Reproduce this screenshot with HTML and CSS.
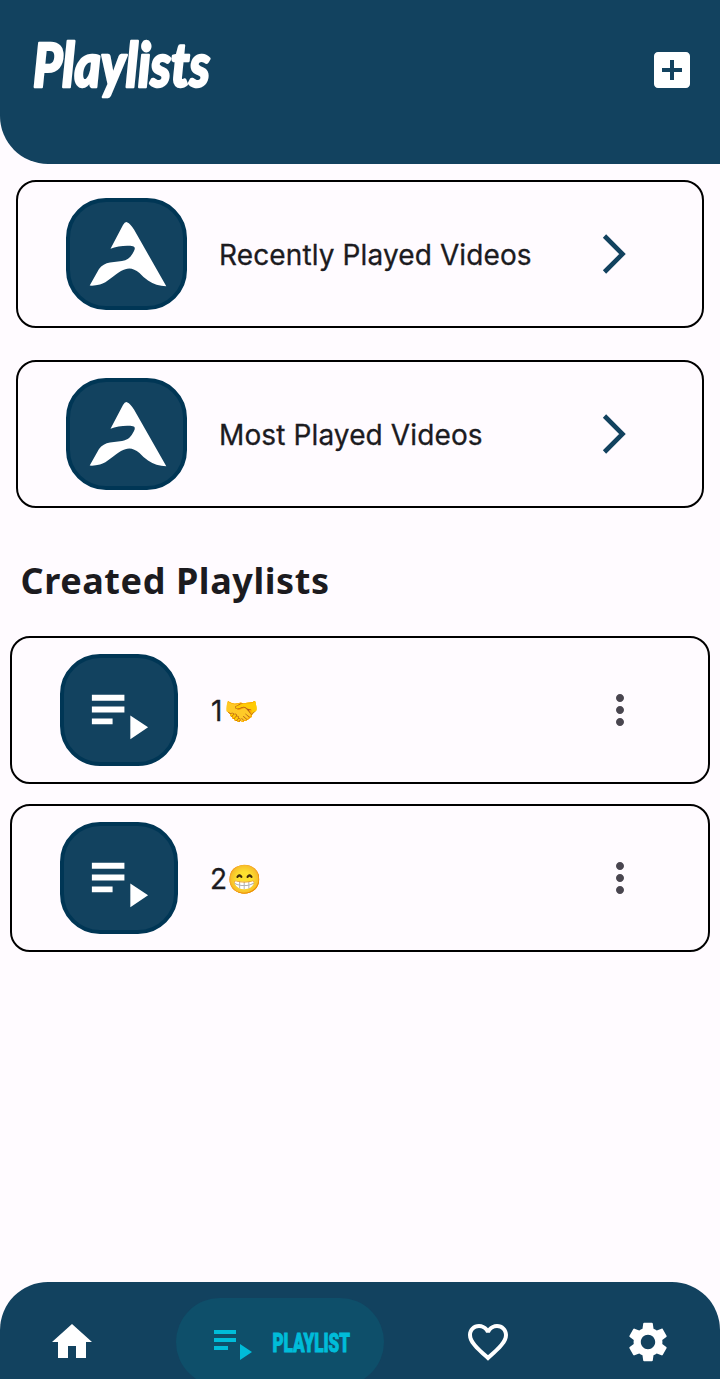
FILE: index.html
```html
<!DOCTYPE html>
<html lang="en">
<head>
<meta charset="utf-8">
<title>Playlists</title>
<link rel="stylesheet" href="styles.css">
</head>
<body>
<svg class="defs" aria-hidden="true">
  <symbol id="logo" viewBox="0 0 80 68"><path fill="#fff" d="M34 5Q36.300 1 38.500 2.500Q41 3.500 45 9.500L77.300 66.300Q67 66 59 60.500Q55 58 50.500 53C44 47.500 39 47 32 51C26 54 18 63 11 64.500Q5 66 .7 65.500L10 49Q14 43.500 21 42.500L33 41C39 40 42 37 45 31Q47 27 44 26.200C38 25 28 26 21.500 28.800Z"/></symbol>
  <symbol id="queue" viewBox="0 0 24 24"><path fill="currentColor" d="M3 6h11v2H3zm0 4h11v2H3zm0 4h7v2H3zm13-1v8l6-4z"/></symbol>
  <symbol id="more" viewBox="0 0 24 24"><path fill="currentColor" d="M12 8c1.100 0 2-.9 2-2s-.9-2-2-2-2 .9-2 2 .9 2 2 2zm0 2c-1.100 0-2 .9-2 2s.9 2 2 2 2-.9 2-2-.9-2-2-2zm0 6c-1.100 0-2 .9-2 2s.9 2 2 2 2-.9 2-2-.9-2-2-2z"/></symbol>
  <symbol id="chevron" viewBox="0 0 28 44"><path fill="none" stroke="currentColor" stroke-width="4.600" d="M6.500 4 24.500 22 6.500 40"/></symbol>
</svg>
<div class="screen">
  <header class="header">
    <svg class="title" width="190" height="86" role="heading"><text x="3" y="55" textLength="177" lengthAdjust="spacingAndGlyphs">Playlists</text></svg>
    <svg class="icon" viewBox="0 0 24 24"><path fill="#fff" d="M19 3H5c-1.110 0-2 .9-2 2v14c0 1.100.89 2 2 2h14c1.100 0 2-.9 2-2V5c0-1.100-.9-2-2-2zm-2 10h-4v4h-2v-4H7v-2h4V7h2v4h4v2z"/></svg>
  </header>
  <main class="main">
    <section class="smart">
      <div class="card">
        <div class="tile"><svg class="logo"><use href="#logo"/></svg></div>
        <span class="label">Recently Played Videos</span>
        <svg class="chevron"><use href="#chevron"/></svg>
      </div>
      <div class="card">
        <div class="tile"><svg class="logo"><use href="#logo"/></svg></div>
        <span class="label">Most Played Videos</span>
        <svg class="chevron"><use href="#chevron"/></svg>
      </div>
    </section>
    <h2 class="heading">Created Playlists</h2>
    <section class="created">
      <div class="card">
        <div class="tile"><svg class="queue"><use href="#queue"/></svg></div>
        <span class="label"><span class="one">1</span><span class="emoji">🤝</span></span>
        <svg class="icon more"><use href="#more"/></svg>
      </div>
      <div class="card">
        <div class="tile"><svg class="queue"><use href="#queue"/></svg></div>
        <span class="label">2<span class="emoji">😁</span></span>
        <svg class="icon more"><use href="#more"/></svg>
      </div>
    </section>
  </main>
  <nav class="nav">
    <svg class="icon" viewBox="0 0 24 24"><path fill="#fff" d="M10 20v-6h4v6h5v-8h3L12 3 2 12h3v8z"/></svg>
    <div class="pill">
      <svg class="icon"><use href="#queue"/></svg>
      <svg class="pill-label" width="80" height="30"><text x="0.500" y="25" textLength="77.500" lengthAdjust="spacingAndGlyphs">PLAYLIST</text></svg>
    </div>
    <svg class="icon" viewBox="0 0 24 24"><path fill="#fff" d="M16.500 3c-1.740 0-3.410.81-4.500 2.090C10.910 3.810 9.240 3 7.500 3 4.420 3 2 5.420 2 8.500c0 3.780 3.400 6.860 8.550 11.540L12 21.350l1.450-1.320C18.600 15.360 22 12.280 22 8.500 22 5.420 19.580 3 16.500 3zm-4.400 15.550l-.1.100-.1-.1C7.140 14.240 4 11.390 4 8.500 4 6.500 5.500 5 7.500 5c1.540 0 3.040.99 3.570 2.360h1.870C13.460 5.990 14.960 5 16.500 5c2 0 3.500 1.500 3.500 3.500 0 2.890-3.140 5.740-7.900 10.050z"/></svg>
    <svg class="icon" viewBox="0 0 24 24"><path fill="#fff" d="M19.140 12.940c.04-.3.060-.61.060-.94 0-.32-.02-.64-.07-.94l2.030-1.580c.18-.14.230-.41.120-.61l-1.920-3.320c-.12-.22-.37-.29-.59-.22l-2.390.96c-.5-.38-1.030-.7-1.620-.94l-.36-2.540c-.04-.24-.24-.41-.48-.41h-3.840c-.24 0-.43.170-.47.410l-.36 2.540c-.59.240-1.130.570-1.620.940l-2.390-.96c-.22-.08-.47 0-.59.220L2.740 8.870c-.12.210-.08.470.12.610l2.030 1.580c-.05.300-.09.630-.09.940s.02.640.07.940l-2.030 1.580c-.18.140-.23.410-.12.610l1.920 3.320c.12.220.37.290.59.220l2.390-.96c.5.380 1.030.7 1.620.94l.36 2.540c.05.240.24.410.48.410h3.840c.24 0 .44-.17.470-.41l.36-2.540c.59-.24 1.130-.56 1.620-.94l2.390.96c.22.080.47 0 .59-.22l1.920-3.320c.12-.22.070-.47-.12-.61l-2.010-1.580zM12 15.600c-1.980 0-3.600-1.620-3.600-3.600s1.620-3.600 3.600-3.600 3.600 1.620 3.600 3.600-1.620 3.600-3.600 3.600z"/></svg>
  </nav>
</div>
</body>
</html>
```
FILE: styles.css
```css
* { box-sizing: border-box; }
body { margin: 0; background: #fffbff; color: #1c1b1f; font-family: Inter, Roboto, sans-serif; }
svg { display: block; flex: none; }
.defs { position: absolute; width: 0; height: 0; }
.screen { height: 1379px; overflow: hidden; display: flex; flex-direction: column; }
.icon { width: 48px; height: 48px; }

.header { height: 164px; flex: none; padding: 32px 24px 0 30px; display: flex; justify-content: space-between; background: #12425f; border-bottom-left-radius: 48px; }
.header .icon { margin-top: 14px; }
.title { overflow: visible; }
.title text { font: italic 900 61px Lato, sans-serif; fill: #fff; stroke: #fff; stroke-width: 2.500px; stroke-linejoin: round; }

.main { flex: 1; }
.smart { padding: 16px 16px 0; display: grid; gap: 32px; }
.card { height: 148px; border: 2px solid #000; border-radius: 20px; padding: 0 48px; display: flex; align-items: center; }
.tile { width: 120.500px; height: 112px; flex: none; border: 4px solid #003655; border-radius: 40px; background: #12425f; color: #fff; }
.logo { width: 80px; height: 68px; margin: 18px 0 0 19px; }
.label { flex: 1; margin-left: 32.500px; padding-top: 2px; font-size: 28px; line-height: 36px; letter-spacing: 0.120px; white-space: nowrap; -webkit-text-stroke: 0.300px #1c1b1f; }
.chevron { width: 28px; height: 44px; margin-right: 28px; color: #12425f; }

.heading { margin: 45px 0 0 20.500px; font: 700 36px/56px "Noto Sans", sans-serif; letter-spacing: 0.580px; }
.created { padding: 27px 10px 0; display: grid; gap: 20px; }
.created .tile { width: 118px; }
.created .label { margin-left: 32px; padding-top: 3px; }
.queue { width: 71px; height: 71px; margin: 19px 0 0 19.400px; }
.one { display: inline-block; width: 14px; padding-left: 1px; }
.emoji { font-family: "Noto Color Emoji", sans-serif; }
.more { margin-right: 16px; color: #49454f; }

.nav { height: 97px; flex: none; padding: 16px 48px 0; display: flex; align-items: flex-start; background: #12425f; border-radius: 48px 48px 0 0; }
.nav > .icon { margin-top: 20px; }
.nav > .icon:first-child { margin-right: 80px; }
.pill { width: 208px; height: 88px; flex: none; margin-right: 80px; padding: 0 32px; display: flex; align-items: center; gap: 16px; background: #0e4f6a; border-radius: 44px; color: #00bcd9; }
.pill + .icon { margin-right: 112px; }
.pill-label { overflow: visible; }
.pill-label text { font: 900 26px Roboto, sans-serif; fill: currentColor; stroke: currentColor; stroke-width: 1px; }
```
